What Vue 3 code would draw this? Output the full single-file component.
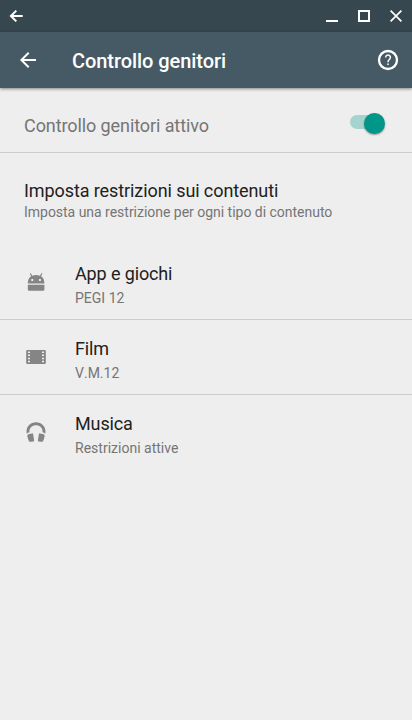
<script setup>
const items = [
  { icon: 'android', title: 'App e giochi', detail: 'PEGI 12' },
  { icon: 'film', title: 'Film', detail: 'V.M.12' },
  { icon: 'music', title: 'Musica', detail: 'Restrizioni attive' },
]
</script>

<template>
  <div class="window">
    <header class="caption">
      <svg class="caption-back" width="16" height="16" viewBox="0 0 16 16"><path d="M14.7 8H3M8.3 2.6 2.9 8l5.4 5.4" /></svg>
      <div class="controls">
        <svg width="12" height="12" viewBox="0 0 12 12"><path class="solid" d="M0 10h12v2H0z" /></svg>
        <svg width="12" height="12" viewBox="0 0 12 12"><path d="M1 1h10v10H1z" /></svg>
        <svg width="12" height="12" viewBox="0 0 12 12"><path class="thin" d="m.6.6 10.8 10.8M11.4.6.6 11.4" /></svg>
      </div>
    </header>

    <div class="toolbar">
      <svg class="back" width="24" height="24" viewBox="0 0 24 24"><path d="M20 11H7.83l5.59-5.59L12 4l-8 8 8 8 1.41-1.41L7.83 13H20z" /></svg>
      <h1>Controllo genitori</h1>
      <svg class="help" width="24" height="24" viewBox="0 0 24 24">
        <circle cx="12" cy="12" r="9" />
        <path d="M9.700 9.400a2.350 2.350 0 1 1 4.100 1.500c-.9 1-1.800 1.500-1.800 3.300" />
        <path class="dot" d="M11.200 15.500h1.600v1.600h-1.600z" />
      </svg>
    </div>

    <div class="master">
      <span>Controllo genitori attivo</span>
      <div class="switch"><div class="thumb"></div></div>
    </div>

    <section class="intro">
      <h2>Imposta restrizioni sui contenuti</h2>
      <p>Imposta una restrizione per ogni tipo di contenuto</p>
    </section>

    <ul class="list">
      <li v-for="item in items" :key="item.title">
        <svg class="icon" width="24" height="24" viewBox="0 0 24 24">
          <path v-if="item.icon === 'android'" fill-rule="evenodd" d="M3.800 14.700h16.600v4.800a1.300 1.300 0 0 1-1.300 1.300h-14a1.300 1.300 0 0 1-1.300-1.300zM3.800 13.600c0-3.400 1.100-6 3.300-7.300L5.800 3.500l.8-.5 1.700 2.700a11 11 0 0 1 7.600 0L17.600 3l.8.500-1.300 2.800c2.200 1.300 3.300 3.900 3.300 7.300zM7.300 9v2h1.900V9zM15 9v2h1.900V9z" />
          <path v-else-if="item.icon === 'film'" fill-rule="evenodd" d="M3.200 5h17.600a1 1 0 0 1 1 1v12a1 1 0 0 1-1 1H3.200a1 1 0 0 1-1-1V6a1 1 0 0 1 1-1zM4 6.500V8h2V6.500zM4 9.500V11h2V9.500zM4 12.700v1.500h2v-1.500zM4 15.800v1.500h2v-1.500zM18 6.500V8h2V6.500zM18 9.500V11h2V9.500zM18 12.700v1.500h2v-1.500zM18 15.800v1.500h2v-1.500z" />
          <g v-else>
            <path d="M12 2.200c-5.400 0-9.500 4-9.500 9.300 0 .9.100 1.600.3 2.300.6-.8 1.500-1.300 2.600-1.500v-.6C5.400 8 8.200 5.300 12 5.300s6.600 2.700 6.600 6.400v.6c1.100.2 2 .7 2.600 1.500.2-.7.300-1.400.3-2.300 0-5.300-4.100-9.300-9.500-9.300z" />
            <path d="m5.200 14 2.800-.6a.9.900 0 0 1 1.100.7l1 6.300a.9.900 0 0 1-.8 1l-2.200.4c-1.300.2-2.300-.5-2.700-1.900l-1-3.400c-.4-1.300.5-2.200 1.800-2.500zM18.800 14l-2.800-.6a.9.900 0 0 0-1.100.7l-1 6.300a.9.900 0 0 0 .8 1l2.200.4c1.300.2 2.300-.5 2.700-1.900l1-3.400c.4-1.300-.5-2.200-1.800-2.500z" />
          </g>
        </svg>
        <div>
          <h3>{{ item.title }}</h3>
          <p>{{ item.detail }}</p>
        </div>
      </li>
    </ul>
  </div>
</template>

<style>
body {
  background: #eeeeee;
}
</style>

<style scoped>
.window {
  height: 720px;
  overflow: hidden;
  background: #eeeeee;
  color: #212121;
  font-family: Roboto, "Liberation Sans", sans-serif;
}
h1, h2, h3, p, ul {
  margin: 0;
  padding: 0;
  font-weight: 400;
}
svg {
  display: block;
  flex: none;
}
.caption {
  display: flex;
  align-items: center;
  justify-content: space-between;
  box-sizing: border-box;
  height: 32px;
  padding: 0 10px 0 8px;
  background: #37474f;
}
.caption path {
  fill: none;
  stroke: #fff;
  stroke-width: 2;
}
.caption path.solid {
  fill: #fff;
  stroke: none;
}
.caption path.thin {
  stroke-width: 1.7;
}
.controls {
  display: flex;
  gap: 20px;
}
.toolbar {
  display: flex;
  align-items: center;
  box-sizing: border-box;
  height: 56px;
  padding: 0 12px 0 16px;
  background: #455a64;
  box-shadow: 0 1px 3px rgba(0, 0, 0, 0.45);
}
.back {
  fill: #fff;
}
h1 {
  flex: 1;
  margin-left: 32px;
  padding-top: 2px;
  color: #fff;
  font-size: 20px;
  font-weight: 500;
  line-height: 24px;
  letter-spacing: -0.06px;
}
.help {
  fill: none;
  stroke: #fff;
  stroke-width: 2.3;
}
.help path {
  stroke-width: 1.5;
}
.help .dot {
  fill: #fff;
  stroke: none;
}
.master {
  display: flex;
  align-items: center;
  justify-content: space-between;
  box-sizing: border-box;
  height: 65px;
  padding: 12px 28px 0 24px;
  border-bottom: 1px solid #cccccc;
  color: #757575;
  font-size: 18px;
  line-height: 22px;
  letter-spacing: -0.09px;
}
.switch {
  display: flex;
  align-items: center;
  justify-content: flex-end;
  width: 34px;
  height: 14px;
  margin-bottom: 8px;
  border-radius: 7px;
  background: #a5d4cf;
}
.thumb {
  flex: none;
  width: 21px;
  height: 21px;
  margin: 3px -1px 0 0;
  border-radius: 50%;
  background: #009688;
  box-shadow: 0 1px 2px rgba(0, 0, 0, 0.4);
}
.intro {
  padding: 27px 24px 23px;
}
h2, h3 {
  font-size: 18px;
  line-height: 22px;
  letter-spacing: -0.09px;
}
h3 {
  letter-spacing: -0.13px;
}
p {
  color: #757575;
  font-size: 14px;
  line-height: 20px;
  letter-spacing: -0.02px;
}
.list {
  list-style: none;
}
.list li {
  display: flex;
  box-sizing: border-box;
  height: 75px;
  padding: 18px 24px 0;
  border-bottom: 1px solid #cccccc;
}
.list li:last-child {
  border-bottom: 0;
}
.icon {
  margin: 7px 27px 0 0;
  fill: #858585;
}
.list p {
  margin-top: 3px;
  font-kerning: none;
  letter-spacing: 0.01px;
}
</style>
